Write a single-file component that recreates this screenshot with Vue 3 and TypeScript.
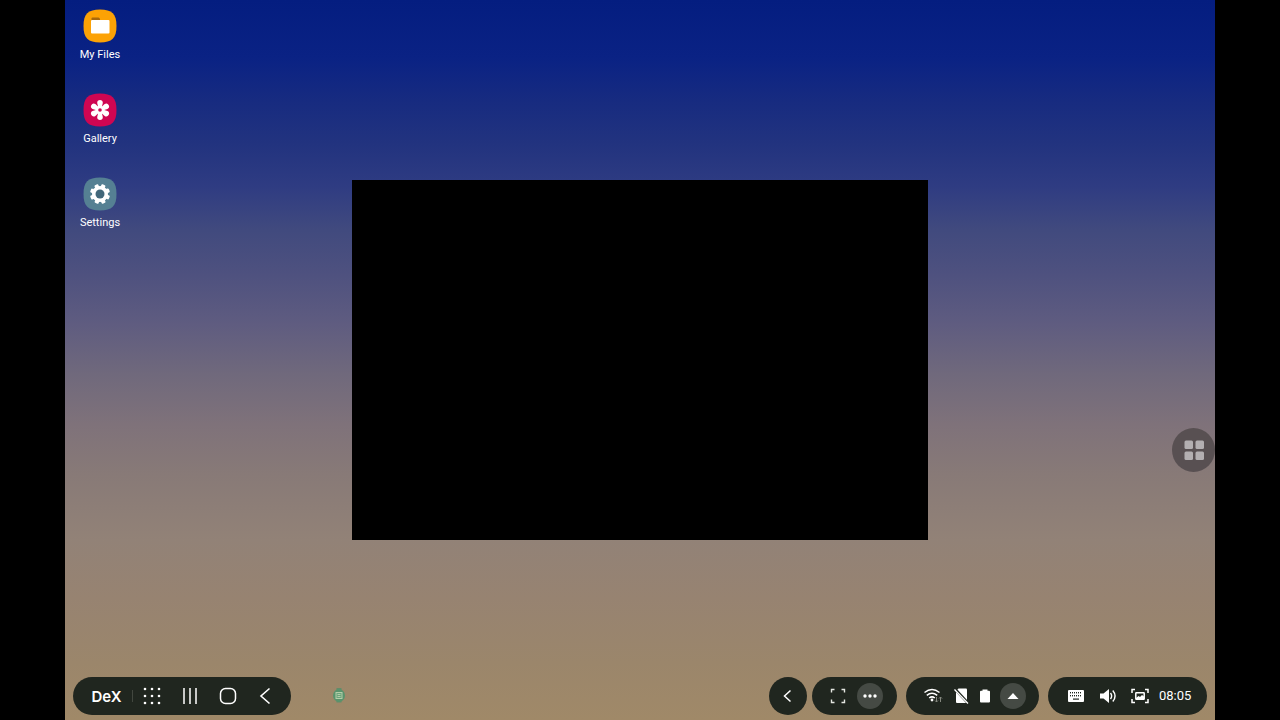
<script setup lang="ts">
interface Shortcut {
  id: string
  label: string
}

const shortcuts: Shortcut[] = [
  { id: 'files', label: 'My Files' },
  { id: 'gallery', label: 'Gallery' },
  { id: 'settings', label: 'Settings' },
]

const petals: number[] = [0, 60, 120, 180, 240, 300]
const teeth: number[] = [22, 67, 112, 157, 202, 247, 292, 337]
const dots: number[] = [2, 9, 16]
const keys: number[] = [3, 5, 7, 9, 11, 13]
</script>

<template>
  <div class="screen">
    <main class="desktop">
      <nav class="shortcuts" aria-label="Desktop shortcuts">
        <button v-for="item in shortcuts" :key="item.id" type="button" class="shortcut">
          <svg class="app-icon" viewBox="0 0 34 34" aria-hidden="true">
            <template v-if="item.id === 'files'">
              <path d="M17 .5C29 .5 33.500 5 33.500 17S29 33.500 17 33.500 .5 29 .5 17 5 .5 17 .5Z" fill="#fca205" />
              <path d="M8.500 9.500q0-1 1-1h6q1 0 1.500 1.500v2h-8.500z" fill="#a8690d" />
              <rect x="8" y="11" width="18.500" height="13.500" rx="1" fill="#fff" />
            </template>
            <template v-else-if="item.id === 'gallery'">
              <path d="M17 .5C29 .5 33.500 5 33.500 17S29 33.500 17 33.500 .5 29 .5 17 5 .5 17 .5Z" fill="#cf0652" />
              <g fill="#fff">
                <path
                  v-for="angle in petals"
                  :key="angle"
                  d="M15.400 15 14.200 10C13.700 6 20.300 6 19.800 10L18.600 15Z"
                  :transform="`rotate(${angle} 17 17)`"
                />
                <circle cx="17" cy="17" r="4.200" />
              </g>
              <circle cx="17" cy="17" r="1.800" fill="#cf0652" />
            </template>
            <template v-else>
              <path d="M17 .5C29 .5 33.500 5 33.500 17S29 33.500 17 33.500 .5 29 .5 17 5 .5 17 .5Z" fill="#558093" />
              <g fill="#fff">
                <circle cx="17" cy="17" r="8" />
                <rect
                  v-for="angle in teeth"
                  :key="angle"
                  x="14.900"
                  y="7"
                  width="4.200"
                  height="5"
                  rx="1"
                  :transform="`rotate(${angle} 17 17)`"
                />
              </g>
              <circle cx="17" cy="17" r="4.500" fill="#42677a" />
            </template>
          </svg>
          <span>{{ item.label }}</span>
        </button>
      </nav>

      <section class="app-window" aria-label="Application window"></section>

      <button type="button" class="assistant" aria-label="Assistant menu">
        <svg width="22" height="22" viewBox="0 0 22 22" fill="#b3afb1" aria-hidden="true">
          <rect x="1.500" y="1.500" width="8.500" height="8.500" rx="1.500" />
          <rect x="12.500" y="1.500" width="8.500" height="8.500" rx="1.500" />
          <rect x="1.500" y="12.500" width="8.500" height="8.500" rx="1.500" />
          <rect x="12.500" y="12.500" width="8.500" height="8.500" rx="1.500" />
        </svg>
      </button>

      <footer class="taskbar">
        <div class="pill nav-pill">
          <button type="button" class="dex">DeX</button>
          <button type="button" class="nav-button" aria-label="Apps">
            <svg width="18" height="18" viewBox="0 0 18 18" fill="#fff" aria-hidden="true">
              <template v-for="y in dots" :key="y">
                <circle v-for="x in dots" :key="x" :cx="x" :cy="y" r="1.300" />
              </template>
            </svg>
          </button>
          <button type="button" class="nav-button" aria-label="Recents">
            <svg width="18" height="18" viewBox="0 0 18 18" stroke="#fff" stroke-width="1.500" aria-hidden="true">
              <path d="M3 1v16M9 1v16M15 1v16" />
            </svg>
          </button>
          <button type="button" class="nav-button" aria-label="Home">
            <svg width="18" height="18" viewBox="0 0 18 18" fill="none" stroke="#fff" stroke-width="1.500" aria-hidden="true">
              <rect x="1.500" y="1.500" width="15" height="15" rx="5" />
            </svg>
          </button>
          <button type="button" class="nav-button" aria-label="Back">
            <svg width="18" height="18" viewBox="0 0 18 18" fill="none" stroke="#fff" stroke-width="1.600" aria-hidden="true">
              <path d="M12.500 1.500 4 9l8.500 7.500" />
            </svg>
          </button>
        </div>

        <button type="button" class="running-app" aria-label="Running app">
          <svg width="14" height="18" viewBox="0 0 14 18" aria-hidden="true">
            <path d="M4.500 1h5v2h-5zM4.500 14h5v1.500h-5z" fill="#648b69" />
            <ellipse cx="7" cy="8.500" rx="6" ry="6.500" fill="#59936c" />
            <rect x="4" y="5.500" width="6" height="6" fill="#6ca47b" stroke="#b4cda9" />
            <path d="M5.500 7.500h3M5.500 9.500h3" stroke="#b4cda9" />
          </svg>
        </button>

        <div class="tray">
          <button type="button" class="pill round-pill" aria-label="Show more">
            <svg width="14" height="14" viewBox="0 0 14 14" fill="none" stroke="#fff" stroke-width="1.500" aria-hidden="true">
              <path d="M9.500 1.500 3.500 7l6 5.500" />
            </svg>
          </button>

          <div class="pill tools-pill">
            <button type="button" class="tool" aria-label="Full screen">
              <svg width="16" height="16" viewBox="0 0 16 16" fill="none" stroke="#e4e6e1" stroke-width="1.400" aria-hidden="true">
                <path d="M1.500 4.500v-3h3M11.500 1.500h3v3M14.500 11.500v3h-3M4.500 14.500h-3v-3" />
              </svg>
            </button>
            <button type="button" class="tool disc" aria-label="More options">
              <svg width="14" height="14" viewBox="0 0 14 14" fill="#fff" aria-hidden="true">
                <circle cx="2" cy="7" r="1.700" />
                <circle cx="7" cy="7" r="1.700" />
                <circle cx="12" cy="7" r="1.700" />
              </svg>
            </button>
          </div>

          <div class="pill status-pill">
            <span class="status" role="img" aria-label="Wi-Fi">
              <svg width="20" height="16" viewBox="0 0 20 16" fill="none" stroke="#fff" stroke-width="1.500" aria-hidden="true">
                <path d="M1.500 4.500q7.500-6 15 0M3.800 7.300q5.200-4.200 10.400 0M6.200 10q2.800-2.300 5.600 0" />
                <circle cx="9" cy="12" r="1.400" fill="#fff" stroke="none" />
                <path d="M13.500 9v5m-1.500-1.500 1.500 1.500 1.500-1.500M17.500 14V9m-1.500 1.500L17.500 9l1.500 1.500" stroke="#85887f" stroke-width="1" />
              </svg>
            </span>
            <span class="status" role="img" aria-label="No SIM card">
              <svg width="16" height="18" viewBox="0 0 16 18" aria-hidden="true">
                <path d="M5.500 1.500H13q1 0 1 1V15q0 1-1 1H4q-1 0-1-1V4Z" fill="#fff" />
                <path d="M2.500 2.500 14 15" stroke="#20261f" stroke-width="2.600" />
                <path d="m1.500 2.500 13.500 14" stroke="#fff" stroke-width="1.300" />
              </svg>
            </span>
            <span class="status battery" role="img" aria-label="Battery full">
              <svg width="12" height="16" viewBox="0 0 12 16" fill="#fff" aria-hidden="true">
                <path d="M3.500 1.500h5v1.300H10q1 0 1 1v9.700q0 1-1 1H2q-1 0-1-1V3.800q0-1 1-1h1.500z" />
              </svg>
            </span>
            <button type="button" class="tool disc" aria-label="Open notifications">
              <svg width="12" height="12" viewBox="0 0 12 12" fill="#fff" aria-hidden="true">
                <path d="m6 3 5.500 6H.5z" />
              </svg>
            </button>
          </div>

          <div class="pill clock-pill">
            <button type="button" class="system" aria-label="Keyboard">
              <svg width="16" height="16" viewBox="0 0 16 16" aria-hidden="true">
                <rect y="2" width="16" height="12" rx="1" fill="#fff" />
                <g fill="#20261f">
                  <rect v-for="x in keys" :key="x" :x="x - 1" y="4" width="1" height="1.400" />
                  <rect v-for="x in keys" :key="x + 20" :x="x - 1" y="7" width="1" height="1.400" />
                  <path d="M5 10.500h6v1.200H5z" />
                </g>
              </svg>
            </button>
            <button type="button" class="system" aria-label="Volume">
              <svg width="18" height="16" viewBox="0 0 18 16" fill="none" stroke="#fff" stroke-width="1.400" aria-hidden="true">
                <path d="M1 5.500h3.500L10 1v14l-5.500-4.500H1z" fill="#fff" stroke="none" />
                <path d="M11.500 5q2.300 3 0 6M13.800 2.500q4.500 5.500 0 11" />
              </svg>
            </button>
            <button type="button" class="system" aria-label="Screenshot">
              <svg width="18" height="16" viewBox="0 0 18 16" fill="none" stroke="#fff" stroke-width="1.500" aria-hidden="true">
                <path d="M1 5V1.500h3M14 1.500h3V5M17 11v3.500h-3M4 14.500H1V11" />
                <rect x="4.800" y="4.700" width="8.400" height="6.600" rx=".5" />
                <path d="m5 10 2.500-2 1.500 1 2-2 2 1.500V11H5z" fill="#fff" stroke="none" />
              </svg>
            </button>
            <time class="clock" datetime="08:05">08:05</time>
          </div>
        </div>
      </footer>
    </main>
  </div>
</template>

<style>
body {
  margin: 0;
  background: #000;
}
</style>

<style scoped>
.screen {
  display: grid;
  grid-template-columns: 65fr minmax(0, 1150fr) 65fr;
  min-height: 100vh;
  background: #000;
  color: #fff;
  font-family: Roboto, "Liberation Sans", sans-serif;
}

button {
  display: flex;
  align-items: center;
  justify-content: center;
  padding: 0;
  border: 0;
  background: none;
  color: inherit;
  font: inherit;
  cursor: pointer;
}

svg {
  display: block;
  flex: none;
}

.desktop {
  position: relative;
  grid-column: 2;
  display: grid;
  grid-template-columns: minmax(0, 1fr);
  grid-template-rows: minmax(0, 1fr);
  background: linear-gradient(
    #041d80 0%,
    #0a2284 8%,
    #172b80 14%,
    #22337f 20%,
    #2f3c82 26%,
    #414a7e 32%,
    #4e517f 38%,
    #5f5c80 45%,
    #70697c 52%,
    #7f727a 59%,
    #887a77 66%,
    #928277 75%,
    #978371 83%,
    #9b866b 92%,
    #a08968 100%
  );
}

.shortcuts,
.app-window,
.taskbar {
  grid-area: 1 / 1;
}

.shortcuts {
  display: flex;
  flex-direction: column;
  place-self: start;
  gap: 31px;
  padding-top: 9px;
}

.shortcut {
  flex-direction: column;
  gap: 5px;
  width: 70px;
  font-size: 11px;
  line-height: 14px;
}

.app-icon {
  width: 34px;
  height: 34px;
}

.app-window {
  place-self: center;
  width: 45vw;
  height: 50vh;
  background: #000;
}

.assistant {
  position: absolute;
  top: calc(62.5% - 22px);
  right: 0;
  width: 43px;
  height: 44px;
  border-radius: 50%;
  background: #585052;
}

.taskbar {
  align-self: end;
  display: flex;
  align-items: center;
  padding: 0 8px 5px;
}

.pill {
  display: flex;
  align-items: center;
  height: 38px;
  border-radius: 19px;
  background: #20261f;
}

.round-pill {
  justify-content: center;
}

.nav-pill {
  padding-right: 6px;
}

.dex {
  width: 60px;
  height: 12px;
  padding-left: 8px;
  border-right: 1px solid #42473f;
  font-family: Inter, "Liberation Sans", sans-serif;
  font-size: 15px;
  font-weight: 600;
}

.nav-button {
  width: 38px;
  height: 38px;
}

.running-app {
  width: 38px;
  height: 38px;
  margin-left: 29px;
}

.tray {
  display: flex;
  margin-left: auto;
}

.round-pill {
  width: 38px;
  margin-right: 5px;
}

.tools-pill {
  gap: 6px;
  margin-right: 9px;
  padding: 0 14px 0 13px;
}

.tool {
  width: 26px;
  height: 26px;
}

.disc {
  border-radius: 50%;
  background: #454a44;
}

.status-pill {
  margin-right: 9px;
  padding: 0 13px;
}

.status {
  display: flex;
  justify-content: center;
  width: 28px;
}

.battery {
  width: 20px;
  margin-right: 5px;
}

.clock-pill {
  padding: 0 15px 0 12px;
}

.system {
  width: 32px;
  height: 38px;
}

.clock {
  width: 33px;
  margin-left: 3px;
  font-size: 13px;
  line-height: 16px;
}
</style>
